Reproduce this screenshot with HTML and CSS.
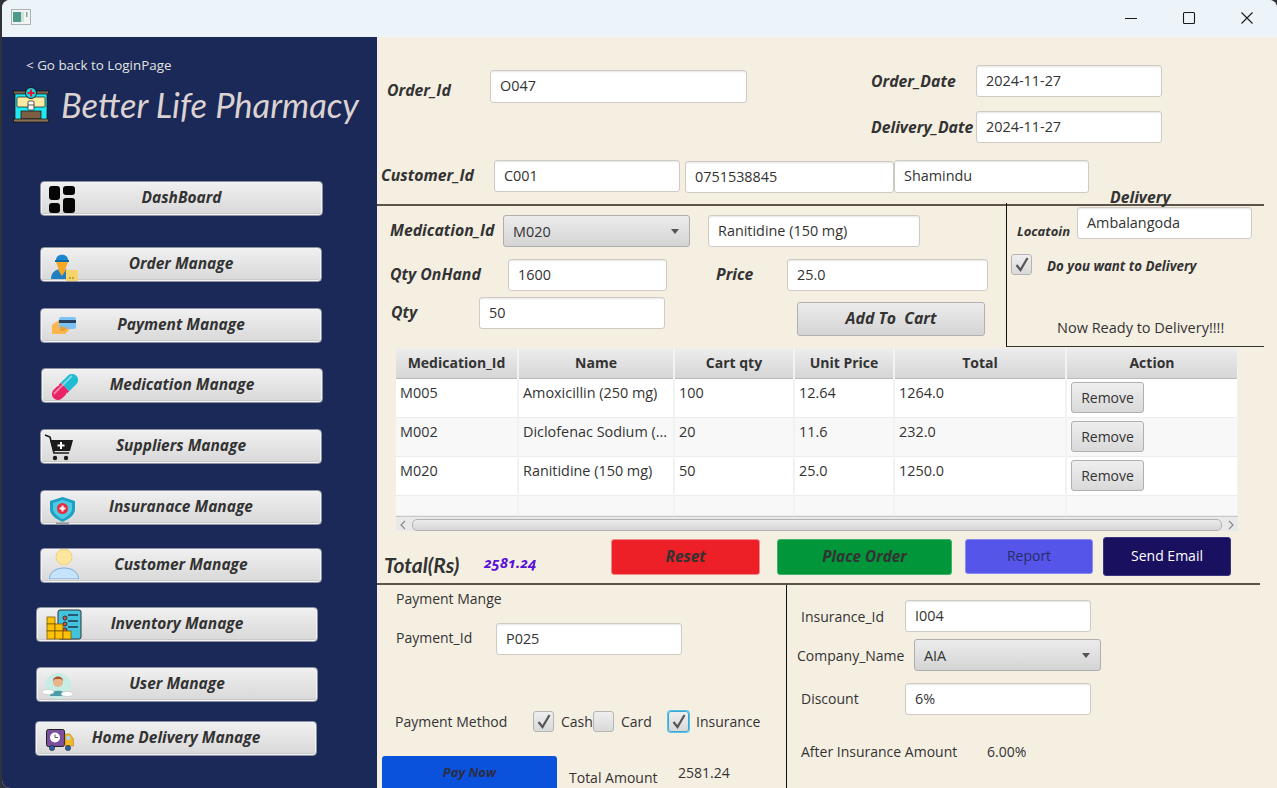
FILE: index.html
```html
<!DOCTYPE html>
<html lang="en">
<head>
<meta charset="utf-8">
<title>Better Life Pharmacy</title>
<link rel="stylesheet" href="styles.css">
</head>
<body>
<div class="window">
  <header class="titlebar">
    <svg class="app-icon" width="20" height="16" viewBox="0 0 20 16"><rect x=".5" y=".5" width="19" height="15" fill="#f1f4f3" stroke="#a9b3b3"/><rect x="2" y="3" width="8" height="10" fill="#4d9a8d"/><rect x="10" y="3" width="3" height="10" fill="#cfe2d8"/><rect x="15" y="3" width="1.5" height="5" fill="#7ea99a"/></svg>
    <div class="controls">
      <svg width="14" height="14" viewBox="0 0 14 14"><path d="M1 7.5H13" stroke="#1a1a1a" stroke-width="1"/></svg>
      <svg width="14" height="14" viewBox="0 0 14 14"><rect x="1.5" y="1.5" width="11" height="11" rx="1" fill="none" stroke="#1a1a1a" stroke-width="1.1"/></svg>
      <svg width="14" height="14" viewBox="0 0 14 14"><path d="M1.5 1.5L12.5 12.5M12.5 1.5L1.5 12.5" stroke="#1a1a1a" stroke-width="1.1"/></svg>
    </div>
  </header>
  <div class="app">
    <aside class="sidebar">
      <div class="back">&lt; Go back to LoginPage</div>
      <div class="brand">
        <svg width="36" height="36" viewBox="0 0 36 36"><rect x="2" y="6" width="32" height="27" fill="#1fe9f5" stroke="#111" stroke-width=".7"/><rect x="0.5" y="4" width="35" height="3" fill="#7b6650" stroke="#111" stroke-width=".7"/><rect x="4" y="10" width="28" height="10" rx="1" fill="#ffeaa5" stroke="#111" stroke-width=".7"/><rect x="8" y="24" width="20" height="8" fill="#7a5f45" stroke="#111" stroke-width=".7"/><rect x="0.5" y="32" width="35" height="3" fill="#8a7256" stroke="#111" stroke-width=".7"/><circle cx="18" cy="6" r="5.500" fill="#22d3df" stroke="#111" stroke-width=".9"/><path d="M18 2.500V9.500M14.500 6H21.500" stroke="#e8132f" stroke-width="2"/><rect x="15" y="14" width="6" height="9" rx="1" fill="#fff" stroke="#111" stroke-width=".7"/><path d="M15 18H21" stroke="#111" stroke-width=".7"/></svg>
        <span class="brand-name">Better Life Pharmacy</span>
      </div>
      <nav class="nav">
        <button class="nav-btn nav-dash"><svg class="ic ic-dash" width="26" height="27" viewBox="0 0 26 27"><rect x="0" y="0" width="11" height="14" rx="3" fill="#050505"/><rect x="14" y="0" width="12" height="9" rx="3" fill="#050505"/><rect x="0" y="17" width="11" height="10" rx="3" fill="#050505"/><rect x="14" y="12" width="12" height="15" rx="3" fill="#050505"/></svg><span>DashBoard</span></button>
        <button class="nav-btn nav-order"><svg class="ic ic-order" width="27" height="29" viewBox="0 0 27 29"><path d="M0 27C0 20 5 17 11 17S21 20 21 27Z" fill="#1f7fc0"/><path d="M5 10H17L14 18H8Z" fill="#f7a823"/><path d="M5 8C5 1 17 1 17 8Z" fill="#1b86cf"/><rect x="4" y="8" width="14" height="2" fill="#0e6aa8"/><path d="M7 18H15L11 24Z" fill="#f7a823"/><rect x="15" y="18" width="12" height="11" fill="#f6d46b"/><path d="M19 25V27M22 25V27" stroke="#8a6a20"/></svg><span>Order Manage</span></button>
        <button class="nav-btn nav-pay"><svg class="ic ic-pay" width="24" height="17" viewBox="0 0 24 17"><path d="M0 8L7 3H11V10L18 12L13 17H0Z" fill="#fbb54d"/><rect x="7" y="0" width="17" height="12" rx="2" fill="#7cc3f4"/><rect x="7" y="3" width="17" height="3" fill="#28415f"/><path d="M9 9L15 11L12 14H8Z" fill="#ee9a35"/></svg><span>Payment Manage</span></button>
        <button class="nav-btn nav-med"><svg class="ic ic-med" width="26" height="26" viewBox="0 0 26 26"><g transform="rotate(-45 13 13)"><rect x="-3" y="7" width="16" height="12" rx="6" fill="#ea2266"/><rect x="13" y="7" width="16" height="12" rx="6" fill="#20bcd2"/><rect x="10" y="7" width="3" height="12" fill="#ea2266"/><rect x="13" y="7" width="5" height="12" fill="#20bcd2"/><rect x="0" y="9" width="26" height="2" rx="1" fill="#fff" opacity=".45"/></g></svg><span>Medication Manage</span></button>
        <button class="nav-btn nav-sup"><svg class="ic ic-sup" width="29" height="27" viewBox="0 0 29 27"><path d="M1 1L6 3L10 19H25" fill="none" stroke="#1a1a1a" stroke-width="1.6"/><path d="M6 6H29L26 17H9Z" fill="#1a1a1a"/><path d="M17 8V15M13.500 11.500H20.500" stroke="#fff" stroke-width="2"/><circle cx="11" cy="24" r="2.200" fill="#1a1a1a"/><circle cx="22" cy="24" r="2.200" fill="#1a1a1a"/></svg><span>Suppliers Manage</span></button>
        <button class="nav-btn nav-ins"><svg class="ic ic-ins" width="25" height="27" viewBox="0 0 25 27"><path d="M12.500 0L25 4V12C25 18 19 22 12.500 25C6 22 0 18 0 12V4Z" fill="#1f9fc4"/><path d="M12.500 3L22 6V12C22 16 17 20 12.500 22C8 20 3 16 3 12V6Z" fill="#4ccbe3"/><circle cx="12.500" cy="11.500" r="5.500" fill="#ea2b3f"/><path d="M12.500 8.500V14.500M9.500 11.500H15.500" stroke="#fff" stroke-width="2"/><rect x="6" y="25.500" width="13" height="1.500" fill="#9a9a9a"/></svg><span>Insuranace Manage</span></button>
        <button class="nav-btn nav-cust"><svg class="ic ic-cust" width="30" height="30" viewBox="0 0 30 30"><circle cx="15" cy="8" r="8" fill="#fde69b" stroke="#e4c66f" stroke-width=".7"/><path d="M.5 30C.5 23 7 19 15 19S29.500 23 29.500 30Z" fill="#c5e3fb" stroke="#7da8df"/></svg><span>Customer Manage</span></button>
        <button class="nav-btn nav-inv"><svg class="ic ic-inv" width="36" height="31" viewBox="0 0 36 31"><rect x="12" y="1" width="23" height="29" rx="2" fill="#42c4dd" stroke="#333"/><path d="M22 6H32M22 12H32M22 18H32" stroke="#235" stroke-width="1.500"/><circle cx="19" cy="9" r="2" fill="#d9534f" stroke="#333"/><circle cx="19" cy="15" r="2" fill="#d9534f" stroke="#333"/><circle cx="19" cy="21" r="2" fill="#d9534f" stroke="#333"/><g fill="#ffc107" stroke="#7a5b00" stroke-width=".8"><rect x="1" y="8" width="8" height="7"/><rect x="1" y="15" width="8" height="7"/><rect x="9" y="15" width="8" height="7"/><rect x="1" y="22" width="8" height="8"/><rect x="9" y="22" width="8" height="8"/><rect x="17" y="22" width="8" height="8"/></g></svg><span>Inventory Manage</span></button>
        <button class="nav-btn nav-user"><svg class="ic ic-user" width="31" height="28" viewBox="0 0 31 28"><circle cx="16" cy="14" r="13" fill="#c6ece5"/><circle cx="16" cy="10" r="5" fill="#eab48a"/><path d="M11 9C11 3 21 3 21 9L19 7H13Z" fill="#a8572c"/><path d="M8 24C8 17 24 17 24 24Z" fill="#4d9ba6"/><ellipse cx="6" cy="20" rx="6" ry="2.500" fill="#fff" stroke="#bbb" stroke-width=".5"/><ellipse cx="25" cy="22" rx="6" ry="2.500" fill="#fff" stroke="#bbb" stroke-width=".5"/></svg><span>User Manage</span></button>
        <button class="nav-btn nav-home"><svg class="ic ic-home" width="28" height="22" viewBox="0 0 28 22"><rect x=".5" y=".5" width="18" height="17" rx="2" fill="#7b4f9d" stroke="#222"/><circle cx="9" cy="8.500" r="5" fill="#fff"/><path d="M9 5.500V8.500H12" fill="none" stroke="#555"/><path d="M19 5H24L27.500 10V17H19Z" fill="#f3b72c" stroke="#9a7414" stroke-width=".5"/><rect x="20.500" y="7" width="3.500" height="4" fill="#a8d4ee"/><circle cx="6" cy="19" r="2.600" fill="#2b5fa8" stroke="#222" stroke-width=".6"/><circle cx="22" cy="19" r="2.600" fill="#2b5fa8" stroke="#222" stroke-width=".6"/></svg><span>Home Delivery Manage</span></button>
      </nav>
    </aside>

    <main class="main">
      <section class="head">
        <div class="head-top">
          <div class="order-row">
            <span class="lbl lbl-order">Order_Id</span>
            <div class="field f-order">O047</div>
          </div>
          <div class="dates">
            <div class="date-row"><span class="lbl lbl-date">Order_Date</span><div class="field f-date">2024-11-27</div></div>
            <div class="date-row"><span class="lbl lbl-date">Delivery_Date</span><div class="field f-date">2024-11-27</div></div>
          </div>
        </div>
        <div class="cust-row">
          <span class="lbl lbl-cust">Customer_Id</span>
          <div class="field f-cid">C001</div>
          <div class="field f-phone">0751538845</div>
          <div class="field f-cname">Shamindu</div>
          <span class="lbl lbl-delivery">Delivery</span>
        </div>
      </section>

      <section class="mid">
        <div class="med">
          <div class="med-row1">
            <span class="lbl lbl-med">Medication_Id</span>
            <div class="combo c-med"><span>M020</span><i class="caret"></i></div>
            <div class="field f-mname">Ranitidine (150 mg)</div>
          </div>
          <div class="med-row2">
            <span class="lbl lbl-onhand">Qty OnHand</span>
            <div class="field f-onhand">1600</div>
            <span class="lbl lbl-price">Price</span>
            <div class="field f-price">25.0</div>
          </div>
          <div class="med-row3">
            <span class="lbl lbl-qty">Qty</span>
            <div class="field f-qty">50</div>
            <button class="cart-btn">Add To&nbsp; Cart</button>
          </div>
        </div>
        <div class="delivery">
          <div class="del-loc">
            <span class="lbl lbl-loc">Locatoin</span>
            <div class="field f-loc">Ambalangoda</div>
          </div>
          <div class="del-check">
            <span class="check on"><svg width="14" height="15" viewBox="0 0 14 15"><path d="M1.500 8L5.500 13L12.500 1" fill="none" stroke="#555" stroke-width="2.200"/></svg></span>
            <span class="lbl lbl-want">Do you want to Delivery</span>
          </div>
          <div class="ready">Now Ready to Delivery!!!!</div>
        </div>
      </section>

      <section class="table-wrap">
        <table class="cart">
          <colgroup><col class="col1"><col class="col2"><col class="col3"><col class="col4"><col class="col5"><col class="col6"></colgroup>
          <thead><tr><th>Medication_Id</th><th>Name</th><th>Cart qty</th><th>Unit Price</th><th>Total</th><th>Action</th></tr></thead>
          <tbody>
            <tr><td>M005</td><td>Amoxicillin (250 mg)</td><td>100</td><td>12.64</td><td>1264.0</td><td><button class="remove">Remove</button></td></tr>
            <tr class="alt"><td>M002</td><td>Diclofenac Sodium (...</td><td>20</td><td>11.6</td><td>232.0</td><td><button class="remove">Remove</button></td></tr>
            <tr><td>M020</td><td>Ranitidine (150 mg)</td><td>50</td><td>25.0</td><td>1250.0</td><td><button class="remove">Remove</button></td></tr>
            <tr class="alt stub"><td></td><td></td><td></td><td></td><td></td><td></td></tr>
          </tbody>
        </table>
        <div class="hscroll">
          <svg width="6" height="10" viewBox="0 0 6 10"><path d="M5 1L1 5L5 9" fill="none" stroke="#8a8a8a" stroke-width="1.200"/></svg>
          <div class="thumb"></div>
          <svg width="6" height="10" viewBox="0 0 6 10"><path d="M1 1L5 5L1 9" fill="none" stroke="#8a8a8a" stroke-width="1.200"/></svg>
        </div>
      </section>

      <section class="totals">
        <span class="total-lbl">Total(Rs)</span>
        <span class="total-val">2581.24</span>
        <button class="act act-reset">Reset</button>
        <button class="act act-place">Place Order</button>
        <button class="act act-report">Report</button>
        <button class="act act-email">Send Email</button>
      </section>

      <section class="bottom">
        <div class="payment">
          <div class="pay-title">Payment Mange</div>
          <div class="pay-id"><span class="txt t-payid">Payment_Id</span><div class="field f-payid">P025</div></div>
          <div class="pay-method">
            <span class="txt t-method">Payment Method</span>
            <span class="check on c1"><svg width="14" height="15" viewBox="0 0 14 15"><path d="M1.500 8L5.500 13L12.500 1" fill="none" stroke="#555" stroke-width="2.200"/></svg></span>
            <span class="txt t-cash">Cash</span>
            <span class="check"></span>
            <span class="txt t-card">Card</span>
            <span class="check on focus"><svg width="14" height="15" viewBox="0 0 14 15"><path d="M1.500 8L5.500 13L12.500 1" fill="none" stroke="#555" stroke-width="2.200"/></svg></span>
            <span class="txt t-ins">Insurance</span>
          </div>
          <div class="pay-foot">
            <button class="pay-now">Pay Now</button>
            <span class="txt t-total">Total Amount</span>
            <span class="txt t-totalv">2581.24</span>
          </div>
        </div>
        <div class="insurance">
          <div class="ins-row r1"><span class="txt t-insid">Insurance_Id</span><div class="field f-ins">I004</div></div>
          <div class="ins-row r2"><span class="txt t-comp">Company_Name</span><div class="combo c-comp"><span>AIA</span><i class="caret"></i></div></div>
          <div class="ins-row r3"><span class="txt t-insid t-disc">Discount</span><div class="field f-ins">6%</div></div>
          <div class="ins-row r4"><span class="txt t-after">After Insurance Amount</span><span class="txt">6.00%</span></div>
        </div>
      </section>
    </main>
  </div>
</div>
</body>
</html>
```
FILE: styles.css
```css
* { box-sizing: border-box; }
html, body { margin: 0; height: 100%; overflow: hidden; }
body { background: #30343a; font-family: "Open Sans", "Noto Sans", sans-serif; font-size: 14px; color: #333; }
button { font-family: inherit; margin: 0; padding: 0; cursor: default; }

.window { margin-left: 2px; width: 1275px; height: 788px; display: flex; flex-direction: column; border-radius: 8px 8px 0 8px; overflow: hidden; background: #f5efe2; }
.titlebar { height: 37px; flex: none; background: #ecf4fa; display: flex; align-items: center; justify-content: space-between; }
.app-icon { margin-left: 9px; margin-top: -3px; }
.controls { display: flex; gap: 44px; margin-right: 23px; margin-top: -1px; }
.app { flex: 1; display: flex; min-height: 0; }

/* sidebar */
.sidebar { width: 375px; flex: none; background: #1a2957; padding-top: 18px; }
.back { margin-left: 24px; color: #e4e2e0; line-height: 20px; font-size: 13.4px; }
.brand { display: flex; align-items: center; margin: 12px 0 0 11px; height: 36px; }
.brand-name { margin-left: 12px; margin-top: -2px; font-family: "Lato", sans-serif; font-style: italic; font-weight: 400; font-size: 34.5px; color: #dcd2d2; white-space: nowrap; }
.nav { display: flex; flex-direction: column; align-items: flex-start; }
.nav-btn { position: relative; width: 282px; height: 35px; padding-bottom: 4px; border: 1px solid #8d92a3; border-radius: 4px; background: linear-gradient(#f0f0f0, #d8d8d8); box-shadow: inset 0 0 0 1px #f4f4f4, inset 0 -2px 0 #c9c9c9; font-size: 15.5px; font-weight: 700; font-style: italic; color: #333; text-align: center; }
.ic { position: absolute; }
.nav-dash { margin: 58px 0 0 38px; width: 283px; }
.nav-order { margin: 31px 0 0 38px; }
.nav-pay { margin: 26px 0 0 38px; }
.nav-med { margin: 25px 0 0 39px; }
.nav-sup { margin: 26px 0 0 38px; }
.nav-ins { margin: 26px 0 0 38px; }
.nav-cust { margin: 23px 0 0 38px; }
.nav-inv { margin: 24px 0 0 34px; }
.nav-user { margin: 25px 0 0 34px; }
.nav-home { margin: 19px 0 0 33px; }
.ic-dash { left: 8px; top: 4px; }
.ic-order { left: 10px; top: 4px; }
.ic-pay { left: 11px; top: 8px; }
.ic-med { left: 10px; top: 5px; }
.ic-sup { left: 3px; top: 4px; }
.ic-ins { left: 9px; top: 6px; }
.ic-cust { left: 8px; top: 0; }
.ic-inv { left: 9px; top: 1px; }
.ic-user { left: 5px; top: 4px; }
.ic-home { left: 10px; top: 7px; }

/* shared form bits */
.main { flex: 1; min-width: 0; }
.lbl { font-weight: 700; font-style: italic; font-size: 15.8px; color: #333; white-space: nowrap; }
.txt { white-space: nowrap; color: #333; }
.field { height: 32px; background: #fff; border: 1px solid #cfcbc4; border-radius: 3px; box-shadow: inset 0 2px 2px -1px #e6e6e6; padding-left: 9px; line-height: 30px; color: #333; font-size: 14.4px; }
.combo { height: 32px; display: flex; align-items: center; justify-content: space-between; padding: 0 10px 0 9px; border: 1px solid #aeaeae; border-radius: 3px; background: linear-gradient(#ececec, #d4d4d4); color: #333; font-size: 14.4px; }
.caret { width: 0; height: 0; border-left: 4.500px solid transparent; border-right: 4.500px solid transparent; border-top: 5px solid #555; }
.check { width: 21px; height: 21px; flex: none; display: inline-flex; align-items: center; justify-content: center; border: 1px solid #b5b5b5; border-radius: 3px; background: linear-gradient(#efefef, #d9d9d9); }

/* head */
.head { height: 169px; width: 887px; padding-top: 27px; border-bottom: 2px solid #5c5349; }
.head-top { display: flex; height: 96px; }
.order-row { display: flex; width: 494px; padding: 6px 0 0 10px; }
.lbl-order { width: 103px; margin-top: 9px; }
.f-order { width: 257px; height: 33px; }
.dates { display: flex; flex-direction: column; gap: 14px; margin-top: 1px; }
.date-row { display: flex; align-items: center; height: 32px; }
.lbl-date { width: 105px; }
.f-date { width: 186px; }
.cust-row { display: flex; align-items: flex-start; padding-left: 4px; }
.lbl-cust { width: 113px; margin-top: 4px; }
.f-cid { width: 186px; }
.f-phone { width: 209px; margin: 1px 0 0 5px; }
.f-cname { width: 195px; height: 33px; }
.lbl-delivery { margin: 26px 0 0 21px; position: relative; z-index: 1; }

/* middle */
.mid { height: 141px; display: flex; width: 887px; }
.med { width: 629px; padding: 9px 0 0 13px; }
.med-row1 { display: flex; align-items: center; height: 32px; }
.lbl-med { width: 113px; margin-bottom: 2px; }
.c-med { width: 187px; }
.f-mname { width: 212px; margin-left: 18px; }
.med-row2 { display: flex; align-items: center; height: 32px; margin-top: 12px; }
.lbl-onhand { width: 118px; margin-bottom: 2px; }
.f-onhand { width: 159px; }
.lbl-price { margin-left: 49px; width: 71px; margin-bottom: 2px; }
.f-price { width: 201px; }
.med-row3 { display: flex; align-items: flex-start; margin-top: 6px; }
.lbl-qty { width: 88px; margin: 4px 0 0 1px; }
.f-qty { width: 186px; }
.cart-btn { width: 188px; height: 34px; margin: 5px 0 0 132px; padding-bottom: 2px; border: 1px solid #b0b0b0; border-radius: 3px; background: linear-gradient(#ececec, #d4d4d4); font-size: 15.8px; font-weight: 700; font-style: italic; color: #333; }
.delivery { width: 258px; height: 144px; margin-top: -3px; border-left: 1.500px solid #111; border-bottom: 1.500px solid #333; position: relative; padding: 4px 0 0 10px; }
.del-loc { display: flex; align-items: flex-start; }
.lbl-loc { font-size: 13px; width: 60px; margin-top: 15px; }
.f-loc { width: 175px; }
.del-check { display: flex; align-items: flex-start; margin: 14px 0 0 -6px; }
.lbl-want { font-size: 13.300px; margin: 3px 0 0 15px; }
.ready { margin: 43px 0 0 40px; font-size: 14.500px; }

/* table */
.table-wrap { width: 842px; margin: 1px 0 0 19px; height: 183px; background: #f4f4f4; display: flex; flex-direction: column; overflow: hidden; }
.cart { width: 842px; table-layout: fixed; border-collapse: collapse; }
.col1 { width: 122px; } .col2 { width: 156px; } .col3 { width: 120px; } .col4 { width: 100px; } .col5 { width: 172px; } .col6 { width: 172px; }
.cart th { height: 30px; padding: 0; background: linear-gradient(#ededed, #d6d6d6); border-right: 2px solid #f2f2f2; border-bottom: 1px solid #bbb; font-size: 14px; font-weight: 700; color: #333; text-align: center; }
.cart td { height: 39px; padding: 0 4px 11px 4px; border-right: 2px solid #f2f2f2; border-bottom: 1px solid #ececec; background: #fff; color: #333; white-space: nowrap; overflow: hidden; font-size: 14.400px; }
.cart tr.alt td { background: #f8f8f8; }
.cart tr.stub td { height: 20px; padding: 0; }
.cart td:last-child { padding: 0 0 0 4px; }
.remove { width: 73px; height: 31px; border: 1px solid #b0b0b0; border-radius: 3px; background: linear-gradient(#efefef, #d9d9d9); font-size: 14px; color: #333; }
.hscroll { margin-top: auto; height: 17px; flex: none; display: flex; align-items: center; gap: 6px; padding: 0 4px; background: #e9e9e9; border-top: 1px solid #c8c8c8; }
.thumb { flex: 1; height: 12px; border: 1px solid #b3b3b3; border-radius: 5px; background: linear-gradient(#ececec, #d6d6d6); }

/* totals */
.totals { height: 54px; width: 883px; display: flex; align-items: flex-start; border-bottom: 2px solid #5c5349; padding-left: 7px; }
.total-lbl { font-size: 21px; line-height: 25px; font-style: italic; font-weight: 700; color: #333; margin-top: 21px; width: 100px; font-family: "Lato", sans-serif; }
.total-val { color: #5a10d8; font-weight: 700; font-style: italic; font-size: 14.500px; margin-top: 21px; width: 127px; font-feature-settings: "onum" 1; font-family: "Noto Sans", sans-serif; }
.act { height: 36px; margin-top: 8px; padding-bottom: 2px; border: 1px solid transparent; border-radius: 3px; font-size: 14px; color: #333; }
.act-reset { width: 149px; background: #ed1f27; border-color: #f08a8a; font-weight: 700; font-style: italic; font-size: 15.300px; }
.act-place { width: 175px; margin-left: 17px; background: #009639; border-color: #3bb56a; font-weight: 700; font-style: italic; font-size: 15.300px; }
.act-report { width: 128px; margin-left: 13px; height: 35px; background: #5555ea; border-color: #8a8af0; color: #2b2b66; }
.act-email { width: 128px; margin-left: 10px; height: 39px; margin-top: 6px; background: #1a1060; border-color: #3a3580; color: #fff; }

/* bottom */
.bottom { display: flex; height: 203px; }
.payment { width: 410px; border-right: 1.500px solid #111; height: 203px; overflow: hidden; }
.pay-title { margin: 4px 0 0 19px; line-height: 19px; }
.pay-id { display: flex; align-items: flex-start; margin: 15px 0 0 19px; }
.t-payid { width: 100px; margin-top: 5px; }
.f-payid { width: 186px; }
.pay-method { display: flex; align-items: center; margin: 54px 0 0 18px; height: 24px; }
.t-method { width: 138px; }
.t-cash { margin-left: 7px; width: 32px; }
.t-card { margin-left: 7px; width: 47px; }
.t-ins { margin-left: 7px; }
.check.focus { border-color: #3aa6d4; box-shadow: 0 0 0 1px #5cc0e8; }
.pay-foot { display: flex; align-items: flex-start; margin: 23px 0 0 5px; }
.pay-now { width: 175px; height: 40px; border: 0; border-radius: 3px 3px 0 0; background: #0a52dc; font-weight: 700; font-style: italic; font-size: 13px; color: #2c2c46; padding-bottom: 9px; }
.t-total { margin: 12px 0 0 12px; width: 109px; }
.t-totalv { margin-top: 7px; }
.insurance { flex: 1; padding: 15px 0 0 14px; }
.ins-row { display: flex; align-items: center; height: 32px; }
.t-insid { width: 104px; }
.t-disc { margin-bottom: 2px; }
.t-comp { width: 117px; margin-left: -4px; }
.f-ins { width: 186px; }
.c-comp { width: 187px; }
.r2 { margin-top: 7px; }
.r3 { margin-top: 12px; }
.r4 { margin-top: 20px; }
.t-after { width: 186px; }
```
